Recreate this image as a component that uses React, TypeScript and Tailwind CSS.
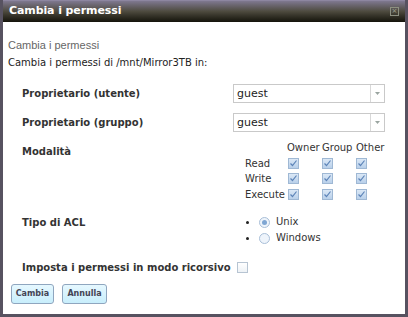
import React from "react"

function Check({ checked = true }: { checked?: boolean }) {
  return (
    <span className="inline-flex h-[11px] w-[11px] items-center justify-center border border-[#9fb8d4] bg-gradient-to-b from-[#dbe8f6] to-[#b9d0ea]">
      {checked && (
        <svg width="9" height="9" viewBox="0 0 9 9">
          <path d="M1.5 4.5 L3.5 6.5 L7.5 1.5" fill="none" stroke="#5d84b8" strokeWidth="1.2" />
        </svg>
      )}
    </span>
  )
}

function Radio({ on }: { on?: boolean }) {
  return (
    <span className="inline-flex h-[11px] w-[11px] items-center justify-center rounded-full border border-[#a9bfd8] bg-[#eef4fb]">
      {on && <span className="h-[5px] w-[5px] rounded-full bg-[#7fa6d3]" />}
    </span>
  )
}

function Select({ value }: { value: string }) {
  return (
    <div className="flex h-[19px] w-[152px] border border-[#c9c9c9] bg-white">
      <div className="flex-1 pl-[3px] text-[11px] leading-[17px] text-[#222]">{value}</div>
      <div className="flex w-[14px] items-center justify-center border-l border-[#d8d8d8]">
        <svg width="5" height="3" viewBox="0 0 5 3">
          <path d="M0 0 H5 L2.5 3 Z" fill="#9aa5a0" />
        </svg>
      </div>
    </div>
  )
}

export default function App() {
  const rows = ["Read", "Write", "Execute"]
  return (
    <div
      className="flex h-[317px] w-[408px] flex-col border-x-[3px] border-b-[3px] border-[#575260] bg-white text-[#333]"
      style={{ fontFamily: '"DejaVu Sans", Verdana, sans-serif' }}
    >
      <div className="flex h-[22px] items-center justify-between border-t border-[#8d86a0] bg-gradient-to-b from-[#7f7890] via-[#4d4a3e] to-[#15140c] pl-[6px] pr-[6px]">
        <span className="text-[11px] font-bold tracking-[-0.1px] text-white">Cambia i permessi</span>
        <span className="flex h-[9px] w-[9px] items-center justify-center border border-[#8c8f80] text-[7px] leading-none text-[#a0a390]">×</span>
      </div>

      <div className="flex flex-1 flex-col px-[5px] pt-[16px]">
        <div className="text-[11px] leading-[14px] text-[#666]" style={{ fontFamily: '"Liberation Sans", Arial, sans-serif' }}>
          Cambia i permessi
        </div>
        <div className="mt-[4px] text-[10px] leading-[14px] text-[#222]">Cambia i permessi di /mnt/Mirror3TB in:</div>

        <div className="mt-[14px] flex flex-col pl-[14px] text-[10px] leading-[15px] text-[#333]">
          <div className="flex items-center">
            <span className="w-[211px] font-bold">Proprietario (utente)</span>
            <Select value="guest" />
          </div>
          <div className="mt-[10px] flex items-center">
            <span className="w-[211px] font-bold">Proprietario (gruppo)</span>
            <Select value="guest" />
          </div>

          <div className="mt-[8px] flex">
            <span className="mt-[4px] w-[223px] font-bold">Modalità</span>
            <div className="grid grid-cols-[42px_35px_34px_30px] text-[10px] leading-[15.5px] text-[#333]">
              <span />
              <span>Owner</span>
              <span>Group</span>
              <span>Other</span>
              {rows.map((r) => (
                <React.Fragment key={r}>
                  <span className="whitespace-nowrap">{r}</span>
                  <span className="flex items-center pl-[1px]"><Check /></span>
                  <span className="flex items-center"><Check /></span>
                  <span className="flex items-center"><Check /></span>
                </React.Fragment>
              ))}
            </div>
          </div>

          <div className="mt-[12px] flex">
            <span className="mt-[1px] w-[223px] font-bold">Tipo di ACL</span>
            <div className="flex flex-col text-[10px] leading-[16px]">
              <div className="flex items-center">
                <span className="ml-[1px] h-[3px] w-[3px] rounded-full bg-[#222]" />
                <span className="ml-[10px] flex"><Radio on /></span>
                <span className="ml-[6px]">Unix</span>
              </div>
              <div className="flex items-center">
                <span className="ml-[1px] h-[3px] w-[3px] rounded-full bg-[#222]" />
                <span className="ml-[10px] flex"><Radio /></span>
                <span className="ml-[6px]">Windows</span>
              </div>
            </div>
          </div>

          <div className="mt-[14px] flex items-center gap-[6px]">
            <span className="font-bold">Imposta i permessi in modo ricorsivo</span>
            <span className="h-[11px] w-[11px] border border-[#b7c4d2] bg-gradient-to-b from-white to-[#eef2f6]" />
          </div>
        </div>

        <div className="mt-[9px] flex gap-[8px] pl-[3px]">
          <button className="h-[20px] w-[43px] rounded-[3px] border border-[#8fa6bf] bg-gradient-to-b from-[#e6f8ff] to-[#c8eefc] text-[8px] font-bold text-[#445]">
            Cambia
          </button>
          <button className="h-[20px] w-[45px] rounded-[3px] border border-[#8fa6bf] bg-gradient-to-b from-[#e6f8ff] to-[#c8eefc] text-[8px] font-bold text-[#445]">
            Annulla
          </button>
        </div>
      </div>
    </div>
  )
}
